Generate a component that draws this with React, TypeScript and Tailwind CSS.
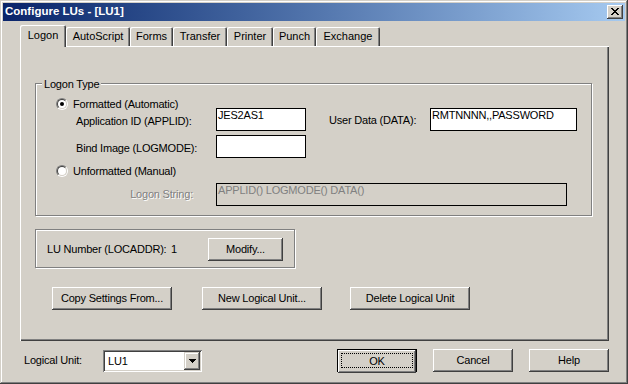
import React from 'react';

const face = "font-['Liberation_Sans',Arial,sans-serif]";

const tabs = [
  { label: 'Logon', w: 'w-[46px]', on: true },
  { label: 'AutoScript', w: 'w-[64px]' },
  { label: 'Forms', w: 'w-[43px]' },
  { label: 'Transfer', w: 'w-[54px]' },
  { label: 'Printer', w: 'w-[46px]' },
  { label: 'Punch', w: 'w-[43px]' },
  { label: 'Exchange', w: 'w-[64px]' },
];

function Button({ label, className = '' }: { label: string; className?: string }) {
  return (
    <div
      className={`flex h-[23px] items-center justify-center bg-[#d4d0c8] shadow-[inset_-1px_-1px_#404040,inset_1px_1px_#fff,inset_-2px_-2px_#808080,inset_2px_2px_#d4d0c8] ${className}`}
    >
      {label}
    </div>
  );
}

function Radio({ checked }: { checked?: boolean }) {
  return (
    <div className="h-[12px] w-[12px] shrink-0 rounded-full border border-t-[#808080] border-l-[#808080] border-b-white border-r-white">
      <div className="flex h-full w-full items-center justify-center rounded-full border border-t-[#404040] border-l-[#404040] border-b-[#d4d0c8] border-r-[#d4d0c8] bg-white">
        {checked && <div className="h-[4px] w-[4px] rounded-full bg-black" />}
      </div>
    </div>
  );
}

function Field({ value, className = '' }: { value?: string; className?: string }) {
  return (
    <div className={`h-[23px] shrink-0 border border-black bg-white pl-[1px] leading-[13px] ${className}`}>{value}</div>
  );
}

function CloseGlyph() {
  return (
    <svg width="8" height="7" viewBox="0 0 8 7" shapeRendering="crispEdges">
      <path
        d="M0 0h2v1H0zM6 0h2v1H6zM1 1h2v1H1zM5 1h2v1H5zM2 2h4v1H2zM3 3h2v1H3zM2 4h4v1H2zM1 5h2v1H1zM5 5h2v1H5zM0 6h2v1H0zM6 6h2v1H6z"
        fill="#000"
      />
    </svg>
  );
}

function DropArrow() {
  return (
    <svg width="7" height="4" viewBox="0 0 7 4" shapeRendering="crispEdges">
      <path d="M0 0h7v1H0zM1 1h5v1H1zM2 2h3v1H2zM3 3h1v1H3z" fill="#000" />
    </svg>
  );
}

export default function App() {
  return (
    <div
      className={`h-[384px] w-[628px] bg-[#d4d0c8] p-[3px] text-[11px] tracking-[-0.2px] text-black ${face} shadow-[inset_-1px_-1px_#404040,inset_1px_1px_#d4d0c8,inset_-2px_-2px_#808080,inset_2px_2px_#fff]`}
    >
      {/* Title bar */}
      <div className="flex h-[18px] items-center justify-between bg-linear-to-r from-[#0a246a] to-[#a6caf0] pl-[2px] pr-[2px]">
        <span className="text-[11.5px] font-bold tracking-normal text-white">Configure LUs - [LU1]</span>
        <div className="flex h-[14px] w-[16px] items-start justify-start bg-[#d4d0c8] pl-[4px] pt-[3px] shadow-[inset_-1px_-1px_#404040,inset_1px_1px_#fff,inset_-2px_-2px_#808080]">
          <CloseGlyph />
        </div>
      </div>

      {/* Tabs */}
      <div className="ml-[17px] mt-[4px] flex h-[21px] items-end tracking-normal">
        {tabs.map((t) =>
          t.on ? (
            <div
              key={t.label}
              className={`relative z-10 -mb-px flex h-[22px] items-center justify-center rounded-t-[2px] bg-[#d4d0c8] pb-[1px] shadow-[inset_1px_1px_#fff,inset_-1px_0_#404040,inset_-2px_0_#808080] ${t.w}`}
            >
              {t.label}
            </div>
          ) : (
            <div
              key={t.label}
              className={`flex h-[19px] items-center justify-center rounded-t-[2px] bg-[#d4d0c8] shadow-[inset_1px_1px_#fff,inset_-1px_0_#404040,inset_-2px_0_#808080] ${t.w}`}
            >
              {t.label}
            </div>
          ),
        )}
      </div>

      {/* Tab panel */}
      <div className="ml-[17px] flex h-[295px] w-[589px] flex-col pl-[15px] pt-[37px] shadow-[inset_1px_1px_#fff,inset_-1px_-1px_#404040,inset_-2px_-2px_#808080]">
        {/* Logon Type group */}
        <div className="relative h-[133px] w-[557px] border border-[#808080] shadow-[inset_1px_1px_#fff,1px_1px_#fff]">
          <div className="absolute left-[6px] top-[-6px] bg-[#d4d0c8] px-[2px] leading-[13px]">Logon Type</div>
          <div className="flex flex-col pt-[14px]">
            <div className="flex h-[12px] items-center pl-[20px]">
              <Radio checked />
              <span className="ml-[5px]">Formatted (Automatic)</span>
            </div>
            <div className="-mt-[2px] flex h-[23px] items-center pl-[40px]">
              <span className="w-[140px] shrink-0 pt-[3px]">Application ID (APPLID):</span>
              <Field value="JES2AS1" className="w-[90px]" />
              <span className="ml-[23px] w-[101px] shrink-0 pt-[2px]">User Data (DATA):</span>
              <Field value="RMTNNNN,,PASSWORD" className="w-[147px]" />
            </div>
            <div className="mt-[4px] flex h-[23px] items-center pl-[40px]">
              <span className="w-[140px] shrink-0 pt-[3px]">Bind Image (LOGMODE):</span>
              <Field className="w-[90px]" />
            </div>
            <div className="mt-[7px] flex h-[12px] items-center pl-[20px]">
              <Radio />
              <span className="ml-[5px]">Unformatted (Manual)</span>
            </div>
            <div className="mt-[6px] flex h-[23px] items-center pl-[40px]">
              <span className="w-[140px] shrink-0 pr-[23px] text-right text-[#808080] [text-shadow:1px_1px_0_#fff]">
                Logon String:
              </span>
              <div className="h-[23px] w-[351px] border border-black bg-[#d4d0c8] pl-[1px] leading-[13px] text-[#808080]">
                APPLID() LOGMODE() DATA()
              </div>
            </div>
          </div>
        </div>

        {/* LU number group */}
        <div className="mt-[13px] flex h-[39px] w-[260px] items-center border border-[#808080] pl-[11px] pt-[1px] shadow-[inset_1px_1px_#fff,1px_1px_#fff]">
          <div className="flex w-[161px] shrink-0">
            <span className="w-[124px] shrink-0">LU Number (LOCADDR):</span>
            <span>1</span>
          </div>
          <Button label="Modify..." className="w-[75px]" />
        </div>

        {/* Action buttons */}
        <div className="ml-[17px] mt-[19px] flex">
          <Button label="Copy Settings From..." className="w-[120px]" />
          <Button label="New Logical Unit..." className="ml-[30px] w-[120px]" />
          <Button label="Delete Logical Unit" className="ml-[28px] w-[120px]" />
        </div>
      </div>

      {/* Bottom bar */}
      <div className="mt-[8px] flex h-[23px] items-center">
        <span className="ml-[21px] w-[79px] shrink-0">Logical Unit:</span>
        <div className="flex h-[22px] w-[99px] items-center bg-white p-[2px] shadow-[inset_1px_1px_#808080,inset_-1px_-1px_#fff,inset_2px_2px_#404040,inset_-2px_-2px_#d4d0c8]">
          <span className="flex-1 pl-[3px] pt-[1px]">LU1</span>
          <div className="flex h-[18px] w-[16px] items-center justify-center bg-[#d4d0c8] pt-[1px] shadow-[inset_-1px_-1px_#404040,inset_1px_1px_#d4d0c8,inset_-2px_-2px_#808080,inset_2px_2px_#fff]">
            <DropArrow />
          </div>
        </div>
        <div className="relative ml-[135px] h-[23px] w-[80px] border border-black">
          <Button label="OK" className="h-[21px] w-full" />
          <div className="pointer-events-none absolute inset-[3px] border border-dotted border-black" />
        </div>
        <Button label="Cancel" className="ml-[16px] w-[80px]" />
        <Button label="Help" className="ml-[16px] w-[80px]" />
      </div>
    </div>
  );
}
